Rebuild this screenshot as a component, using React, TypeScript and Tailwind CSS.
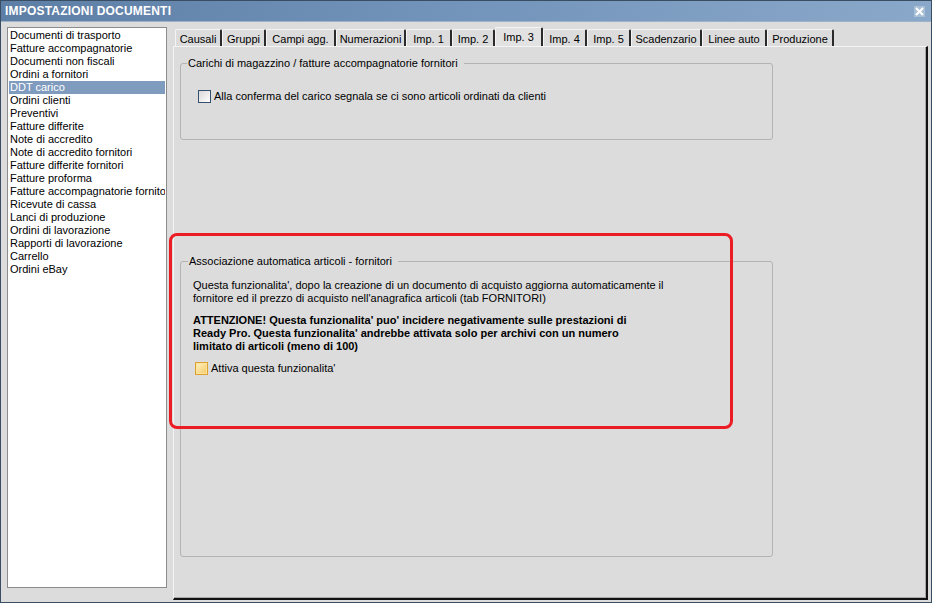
const font = { fontFamily: '"Liberation Sans", Arial, sans-serif' };

const documenti = [
  "Documenti di trasporto",
  "Fatture accompagnatorie",
  "Documenti non fiscali",
  "Ordini a fornitori",
  "DDT carico",
  "Ordini clienti",
  "Preventivi",
  "Fatture differite",
  "Note di accredito",
  "Note di accredito fornitori",
  "Fatture differite fornitori",
  "Fatture proforma",
  "Fatture accompagnatorie fornitori",
  "Ricevute di cassa",
  "Lanci di produzione",
  "Ordini di lavorazione",
  "Rapporti di lavorazione",
  "Carrello",
  "Ordini eBay",
];

const tabs = [
  { label: "Causali", w: "w-[47px]" },
  { label: "Gruppi", w: "w-[44px]" },
  { label: "Campi agg.", w: "w-[70px]" },
  { label: "Numerazioni", w: "w-[70px]" },
  { label: "Imp. 1", w: "w-[46px]" },
  { label: "Imp. 2", w: "w-[43px]" },
  { label: "Imp. 3", w: "w-[48px]", active: true },
  { label: "Imp. 4", w: "w-[44px]" },
  { label: "Imp. 5", w: "w-[44px]" },
  { label: "Scadenzario", w: "w-[71px]" },
  { label: "Linee auto", w: "w-[65px]" },
  { label: "Produzione", w: "w-[67px]" },
];

const Checkbox = ({ hover }: { hover?: boolean }) =>
  hover ? (
    <div className="w-[13px] h-[13px] shrink-0 border border-[#e0a030] bg-gradient-to-br from-[#fff3c4] to-[#f6c860] shadow-[inset_0_0_0_1px_#fbe3a0]" />
  ) : (
    <div className="w-[13px] h-[13px] shrink-0 border border-[#33506f] bg-gradient-to-br from-[#d8d8d8] to-[#ffffff]" />
  );

export default function App() {
  return (
    <div
      className="w-[932px] h-[603px] flex flex-col bg-[#dcdcdc] border border-[#3a4e63] text-[11px] text-black overflow-hidden"
      style={font}
    >
      {/* barra del titolo */}
      <div className="h-[21px] shrink-0 flex items-center justify-between pl-[4px] pr-[6px] bg-gradient-to-r from-[#5d7ea5] via-[#7394bb] to-[#8aa8c9] border-b border-[#9fb3c8]">
        <span className="text-white font-bold text-[12px] tracking-[0.2px]">IMPOSTAZIONI DOCUMENTI</span>
        <div className="w-[11px] h-[11px] bg-[#a9bfd6] flex items-center justify-center">
          <svg width="9" height="9" viewBox="0 0 9 9">
            <path d="M1 1 L8 8 M8 1 L1 8" stroke="#fff" strokeWidth="2" />
          </svg>
        </div>
      </div>

      <div className="flex-1 flex pl-[6px] pr-[3px] pt-[5px] pb-[2px] gap-[6px]">
        {/* elenco documenti */}
        <div className="w-[160px] h-[561px] bg-white border border-[#8c8c8c] pt-[1px] px-[1px] overflow-hidden">
          {documenti.map((d) => (
            <div
              key={d}
              className={`h-[13px] leading-[13px] pl-[1px] whitespace-nowrap overflow-hidden ${
                d === "DDT carico" ? "bg-[#7f9bbd] text-white" : ""
              }`}
            >
              {d}
            </div>
          ))}
        </div>

        {/* schede */}
        <div className="flex-1 flex flex-col">
          <div className="h-[19px] flex items-end pl-[2px]">
            {tabs.map((t) => (
              <div
                key={t.label}
                className={`${t.w} flex items-center justify-center pt-[2px] border-l border-t border-[#f4f4f4] border-r-[2px] border-r-[#2a2a2a] rounded-t-[2px] ${
                  t.active ? "h-[19px] bg-[#e2e2e2] pb-[2px]" : "h-[17px] bg-[#dcdcdc]"
                }`}
              >
                {t.label}
              </div>
            ))}
          </div>

          <div className="flex-1 border-l border-t border-[#f4f4f4] border-r-[2px] border-b-[2px] border-r-[#111] border-b-[#111] shadow-[inset_-1px_-1px_0_#a8a8a8] pl-[6px] pt-[10px]">
            <fieldset className="w-[593px] h-[83px] border border-[#b3b3b3] rounded-[3px]">
              <legend className="ml-[6px] pl-[1px] pr-[6px] leading-[13px]">
                Carichi di magazzino / fatture accompagnatorie fornitori
              </legend>
              <div className="flex items-center gap-[3px] mt-[18px] ml-[17px]">
                <Checkbox />
                <span>Alla conferma del carico segnala se ci sono articoli ordinati da clienti</span>
              </div>
            </fieldset>

            <fieldset className="w-[593px] h-[302px] mt-[115px] border border-[#b3b3b3] rounded-[3px]">
              <legend className="ml-[7px] pl-[1px] pr-[6px] leading-[13px]">
                Associazione automatica articoli - fornitori
              </legend>
              <div className="pl-[12px]">
                <p className="mt-[11px] leading-[13px] whitespace-nowrap">
                  Questa funzionalita', dopo la creazione di un documento di acquisto aggiorna automaticamente il
                  <br />
                  fornitore ed il prezzo di acquisto nell'anagrafica articoli (tab FORNITORI)
                </p>
                <p className="mt-[9px] leading-[13px] font-bold whitespace-nowrap">
                  ATTENZIONE! Questa funzionalita' puo' incidere negativamente sulle prestazioni di
                  <br />
                  Ready Pro. Questa funzionalita' andrebbe attivata solo per archivi con un numero
                  <br />
                  limitato di articoli (meno di 100)
                </p>
                <div className="flex items-center gap-[3px] mt-[7px] ml-[2px]">
                  <Checkbox hover />
                  <span>Attiva questa funzionalita'</span>
                </div>
              </div>
            </fieldset>
          </div>
        </div>
      </div>

      {/* evidenziazione rossa */}
      <div className="absolute left-[169px] top-[233px] w-[564px] h-[196px] border-[3px] border-[#ec1c24] rounded-[8px] pointer-events-none" />
    </div>
  );
}
